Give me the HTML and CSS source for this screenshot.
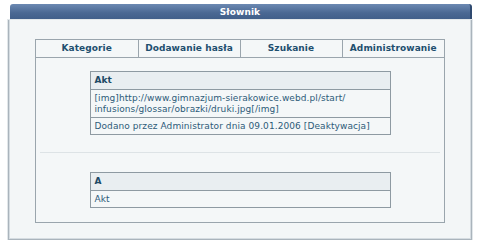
FILE: index.html
```html
<!DOCTYPE html>
<html lang="pl">
<head>
  <meta charset="UTF-8" />
  <title>Słownik</title>
  <link rel="stylesheet" href="styles.css">
</head>
<body>

<div class="panel">
  <div class="panel-head">Słownik</div>
  <div class="panel-body">
    <div class="inner">
      <table class="tabs">
        <tr>
          <td>Kategorie</td>
          <td>Dodawanie hasła</td>
          <td>Szukanie</td>
          <td>Administrowanie</td>
        </tr>
      </table>

      <table class="entry">
        <tr><th>Akt</th></tr>
        <tr><td>[img]http://www.gimnazjum-sierakowice.webd.pl/start/<br>infusions/glossar/obrazki/druki.jpg[/img]</td></tr>
        <tr><td>Dodano przez Administrator dnia 09.01.2006 [Deaktywacja]</td></tr>
      </table>

      <div class="sep"></div>

      <table class="entry">
        <tr><th>A</th></tr>
        <tr><td>Akt</td></tr>
      </table>
    </div>
  </div>
</div>

</body>
</html>
```

FILE: styles.css
```css
body { margin: 0; background: #fff; font-family: "DejaVu Sans", Verdana, sans-serif; font-size: 9px; letter-spacing: 0.08px; color: #2d5b78; }
.panel { margin: 4px 0 0 8px; width: 464px; }
.panel-head {
  height: 16px; line-height: 16px;
  margin-left: 2px;
  text-align: center; font-weight: bold; color: #fff;
  background: linear-gradient(#6c89b2, #4a6893 55%, #3f5d88);
  border-radius: 3px 3px 0 0;
  border-right: 2px solid #2f4a70;
}
.panel-body {
  background: #f3f6f7;
  border: 1px solid #aab4bc;
  border-top: none;
  box-shadow: inset 1px 0 0 #d5dce1, inset -1px -1px 0 #d5dce1;
  outline: 1px solid #e2e7ea;
  padding: 19px 26px 16px 26px;
}
.inner {
  border: 1px solid #9aa5ad;
  background: #f4f7f8;
  padding-bottom: 14px;
}
table { border-collapse: collapse; }
.tabs { width: 100%; }
.tabs td {
  width: 25%;
  text-align: center; font-weight: bold; color: #1e4f6f;
  padding: 3px 0; line-height: 11px;
  border-bottom: 1px solid #9aa5ad;
  border-left: 1px solid #9aa5ad;
}
.tabs td:first-child { border-left: none; }
.entry {
  width: 301px;
  margin: 13px auto 0;
  border: 1px solid #8e9aa2;
}
.entry th {
  text-align: left; font-weight: bold; color: #1e4a66;
  background: #e9eef1;
  padding: 3px 4px; line-height: 11px;
  border-bottom: 1px solid #8e9aa2;
}
.entry td {
  padding: 3px 4px 2px; line-height: 11px;
  border-bottom: 1px solid #8e9aa2;
  background: #f4f7f8;
}
.sep { height: 1px; background: #dde3e6; margin: 17px 4px 0; }
.sep + .entry { margin-top: 19px; }
```
